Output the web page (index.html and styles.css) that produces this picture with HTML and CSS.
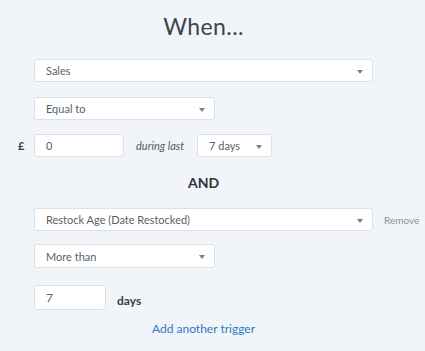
FILE: index.html
```html
<!DOCTYPE html>
<html>
<head>
<meta charset="utf-8">
<link rel="stylesheet" href="styles.css">
</head>
<body>
<div class="panel">
  <h1 class="title">When...</h1>

  <div class="select wide"><span>Sales</span><i class="caret"></i></div>
  <div class="select half gap1"><span>Equal to</span><i class="caret"></i></div>

  <div class="row money">
    <span class="currency">£</span>
    <div class="input amount">0</div>
    <span class="muted">during last</span>
    <div class="select period"><span>7 days</span><i class="caret"></i></div>
  </div>

  <div class="and">AND</div>

  <div class="row">
    <div class="select wide"><span>Restock Age (Date Restocked)</span><i class="caret"></i></div>
    <a class="remove">Remove</a>
  </div>

  <div class="select half gap2"><span>More than</span><i class="caret"></i></div>

  <div class="row daysrow">
    <div class="input small">7</div>
    <span class="unit">days</span>
  </div>

  <div class="addlink"><a>Add another trigger</a></div>
</div>
</body>
</html>
```

FILE: styles.css
```css
html, body {
  margin: 0;
  padding: 0;
  background: #f1f4f8;
  font-family: Lato, "Open Sans", "Liberation Sans", sans-serif;
  color: #555b63;
}

.panel {
  width: 339px;
  padding: 0 0 0 34px;
  display: flex;
  flex-direction: column;
  align-items: flex-start;
}

.title {
  align-self: stretch;
  text-align: center;
  margin: 11px 0 0 0;
  font-size: 23px;
  font-weight: 400;
  line-height: 30px;
  color: #40454b;
  letter-spacing: 0.4px;
}

.select, .input {
  box-sizing: border-box;
  height: 23px;
  background: #fff;
  border: 1px solid #dde1e6;
  border-radius: 3px;
  display: flex;
  align-items: center;
  font-size: 11px;
  color: #5a5f66;
  padding-left: 11px;
}

.select { position: relative; }

.caret {
  position: absolute;
  right: 9px;
  top: 10px;
  width: 0;
  height: 0;
  border-left: 3.5px solid transparent;
  border-right: 3.5px solid transparent;
  border-top: 4px solid #7c8087;
}

.wide { width: 339px; margin-top: 18px; }
.half { width: 181px; }
.gap1 { margin-top: 15px; }
.gap2 { margin-top: 13px; height: 24px; }

.row {
  display: flex;
  align-items: center;
}

.money {
  margin-top: 14px;
  margin-left: -17px;
}

.currency {
  width: 17px;
  font-weight: 700;
  font-size: 11px;
  color: #3a3f45;
  padding-left: 1px;
  box-sizing: border-box;
}

.amount { width: 90px; height: 23px; }

.muted {
  font-style: italic;
  font-size: 11px;
  color: #555b63;
  margin: 0 13px 0 12px;
}

.period { width: 75px; }

.and {
  align-self: stretch;
  text-align: center;
  font-weight: 700;
  font-size: 14px;
  color: #2e3338;
  margin-top: 17px;
  line-height: 18px;
}

.row .wide { margin-top: 0; }
.and + .row { margin-top: 16px; }

.remove {
  margin-left: 11px;
  font-size: 10px;
  color: #8b9199;
  white-space: nowrap;
}

.daysrow { margin-top: 17px; }
.small { width: 72px; height: 25px; font-size: 12px; }
.unit {
  margin-left: 11px;
  font-weight: 700;
  font-size: 12px;
  color: #3a3f45;
  padding-top: 6px;
}

.addlink {
  align-self: stretch;
  text-align: center;
  margin-top: 11px;
  font-size: 12px;
}
.addlink a { color: #2b7cc4; }
```
